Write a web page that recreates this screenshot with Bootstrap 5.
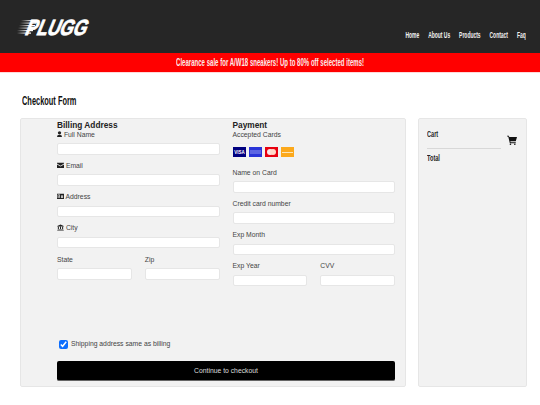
<!DOCTYPE html>
<html lang="en">
<head>
<meta charset="utf-8">
<title>Checkout</title>
<link href="https://cdn.jsdelivr.net/npm/bootstrap@5.3.0/dist/css/bootstrap.min.css" rel="stylesheet">
<style>
html,body{height:405px;overflow:hidden}
body{font-family:"Liberation Sans",Arial,sans-serif;font-size:6.8px;color:#333;background:#fff}
.cond{font-family:"Liberation Sans","Arial Narrow",sans-serif;font-weight:700}
.squeeze{display:inline-block;transform:scaleX(.595);white-space:nowrap}
.topbar{height:53px;background:#262626;padding:0 14px 0 16px}
.brand-logo{display:block;width:76px;height:22px;margin-top:16px;overflow:visible}
.brand-logo text{font-family:"Liberation Sans",sans-serif;font-weight:700;font-size:22px;fill:#fff;stroke:#fff;stroke-width:.8px}
.menu-links{gap:16.500px;margin-top:30px;font-size:9.200px;line-height:10px;transform:scaleX(.54);transform-origin:right top}
.menu-links a{color:#f1f1f1;text-decoration:none}
.sale-band{height:19px;background:#f00;color:#fbeaea;font-size:10.200px;line-height:20px;text-align:center;box-shadow:0 1px 0 #ffd9d9;overflow:hidden}
.page-title{margin:22px 0 10px 22px;font-size:13.500px;line-height:14px;color:#111}
.page-title .squeeze{transform-origin:left center;transform:scaleX(.55)}
.main-area{padding:0 13px 0 20px;gap:12px}
.form-panel,.cart-panel{height:269px;background:#f2f2f2;border:1px solid #e6e6e6;border-radius:2px;will-change:opacity}
.form-panel{width:386px;padding:3px 10px 5px 36px}
.cart-panel{width:109px;padding:10px 8px 0 8px}
.form-cols{gap:13px;height:216px}
.form-col{width:162.500px}
.sect-head{font-size:8.300px;font-weight:700;line-height:7.500px;color:#222}
.fld-label{display:block;line-height:9px;margin-bottom:4.500px;color:#444;white-space:nowrap}
.fld-input{display:block;width:100%;height:11.500px;background:#fff;border:1px solid #e6e6e6;border-radius:2px;margin-bottom:6.300px;padding:0}
.half-gap{gap:13px}
.half-gap>div{flex:1 1 0;min-width:0}
.ico{height:6.500px;vertical-align:-.5px;fill:#222}
.ico-user{width:5px}
.ico-wide{width:7px}
.cards-line{gap:3px;margin:8px 0 11px;height:10px}
.cards-line svg{width:13px;height:10px;display:block}
.check-line{gap:3px;margin:0 0 0 2px;height:12px;color:#444}
.check-line input{width:9px;height:9px;margin:0;accent-color:#0d6efd}
.checkout-btn{display:block;width:100%;height:20px;margin-top:11px;padding:0;background:#000;border:0;border-bottom:1px solid #666;border-radius:2px;color:#ddd;font-size:6.800px;line-height:20px}
.cart-title{font-size:9px;line-height:10px;color:#222;transform-origin:left center;transform:scaleX(.62)}
.cart-head{height:20px;border-bottom:1px solid #d8d8d8;width:74px}
.cart-row{width:100%}
.cart-ico{width:10px;height:10px;fill:#111;margin:6px 1px 0 0}
.cart-total{font-size:9px;line-height:10px;color:#222;margin-top:4px}
</style>
</head>
<body>
<nav class="topbar d-flex justify-content-between align-items-start">
  <svg class="brand-logo" viewBox="0 0 76 22" role="img" aria-label="Plugg logo">
    <defs>
      <linearGradient id="fadeLine" x1="0" x2="1" y1="0" y2="0"><stop offset="0" stop-color="#fff" stop-opacity="0"/><stop offset=".7" stop-color="#fff"/></linearGradient>
    </defs>
    <g fill="url(#fadeLine)">
      <rect x="1" y="14" width="16" height="1.200"/><rect x="2" y="11.500" width="16" height="1.200"/><rect x="3" y="9" width="16" height="1.200"/><rect x="4" y="6.500" width="16" height="1.200"/><rect x="5" y="4" width="16" height="1.200"/><rect x="1" y="16.500" width="14" height="1.200"/>
    </g>
    <text transform="translate(8 19) skewX(-22)" x="0" y="0" textLength="61" lengthAdjust="spacingAndGlyphs">PLUGG</text>
  </svg>
  <div class="menu-links d-flex cond">
    <a href="#">Home</a><a href="#">About Us</a><a href="#">Products</a><a href="#">Contact</a><a href="#">Faq</a>
  </div>
</nav>
<div class="sale-band cond"><span class="squeeze">Clearance sale for A/W18 sneakers! Up to 80% off selected items!</span></div>
<h1 class="page-title cond"><span class="squeeze">Checkout Form</span></h1>
<div class="main-area d-flex">
  <form class="form-panel">
    <div class="form-cols d-flex">
      <div class="form-col">
        <div class="sect-head">Billing Address</div>
        <label class="fld-label"><svg class="ico ico-user" viewBox="0 0 12 16"><circle cx="6" cy="4.500" r="4"/><path d="M0 16c0-5 1-7 6-7s6 2 6 7z"/></svg> Full Name</label>
        <input class="fld-input" type="text">
        <label class="fld-label"><svg class="ico ico-wide" viewBox="0 0 16 14"><path d="M0 1h16v2L8 8 0 3z"/><path d="M0 5l8 5 8-5v8H0z"/></svg> Email</label>
        <input class="fld-input" type="text">
        <label class="fld-label"><svg class="ico ico-wide" viewBox="0 0 16 14"><path fill-rule="evenodd" d="M0 1h16v12H0zM1.500 3v8h5V3zM9 4v1.500h5V4zM9 7v1.500h5V7zM9 9.500V11h5V9.500z"/><circle cx="4" cy="5.500" r="1.300"/><path d="M2 10c0-2 1-2.500 2-2.500s2 .5 2 2.500z"/></svg> Address</label>
        <input class="fld-input" type="text">
        <label class="fld-label"><svg class="ico ico-wide" viewBox="0 0 16 16"><path d="M8 1l8 4v1H0V5zM1.500 7h2.500v5H1.500zM6.800 7h2.500v5H6.800zM12 7h2.500v5H12zM1 13h14v1H1zM0 14.500h16V16H0z"/></svg> City</label>
        <input class="fld-input" type="text">
        <div class="half-gap d-flex">
          <div><label class="fld-label">State</label><input class="fld-input" type="text"></div>
          <div><label class="fld-label">Zip</label><input class="fld-input" type="text"></div>
        </div>
      </div>
      <div class="form-col">
        <div class="sect-head">Payment</div>
        <label class="fld-label mb-0">Accepted Cards</label>
        <div class="cards-line d-flex">
          <svg viewBox="0 0 13 10"><rect width="13" height="10" fill="#000080"/><text x="6.500" y="7" font-size="4.500" font-weight="700" fill="#fff" text-anchor="middle">VISA</text></svg>
          <svg viewBox="0 0 13 10"><rect width="13" height="10" fill="#2a35d8"/><rect x="1" y="3.500" width="11" height="1" fill="#8d96ee"/><rect x="1" y="5.500" width="11" height="1" fill="#8d96ee"/></svg>
          <svg viewBox="0 0 13 10"><rect width="13" height="10" fill="#e8000f"/><circle cx="5" cy="5" r="3" fill="#fff" opacity=".9"/><circle cx="8" cy="5" r="3" fill="#ffd9c9"/></svg>
          <svg viewBox="0 0 13 10"><rect width="13" height="10" fill="#fca91c"/><rect x="1" y="5" width="11" height="1" fill="#fde6b8"/></svg>
        </div>
        <label class="fld-label">Name on Card</label>
        <input class="fld-input" type="text">
        <label class="fld-label">Credit card number</label>
        <input class="fld-input" type="text">
        <label class="fld-label">Exp Month</label>
        <input class="fld-input" type="text">
        <div class="half-gap d-flex">
          <div><label class="fld-label">Exp Year</label><input class="fld-input" type="text"></div>
          <div><label class="fld-label">CVV</label><input class="fld-input" type="text"></div>
        </div>
      </div>
    </div>
    <label class="check-line d-flex align-items-center"><input type="checkbox" checked> Shipping address same as billing</label>
    <button type="button" class="btn checkout-btn">Continue to checkout</button>
  </form>
  <aside class="cart-panel">
    <div class="cart-row d-flex justify-content-between align-items-start">
      <div class="cart-head cond"><span class="cart-title squeeze">Cart</span></div>
      <svg class="cart-ico" viewBox="0 0 16 16"><path d="M0 1h3l.6 2H16l-2 7H5.300l.4 1.500H14V13H4.500L2 2.500H0z"/><circle cx="5.500" cy="14.700" r="1.300"/><circle cx="12.500" cy="14.700" r="1.300"/></svg>
    </div>
    <div class="cart-total cond"><span class="cart-title squeeze">Total</span></div>
  </aside>
</div>
<script src="https://cdn.jsdelivr.net/npm/bootstrap@5.3.0/dist/js/bootstrap.bundle.min.js"></script>
</body>
</html>
